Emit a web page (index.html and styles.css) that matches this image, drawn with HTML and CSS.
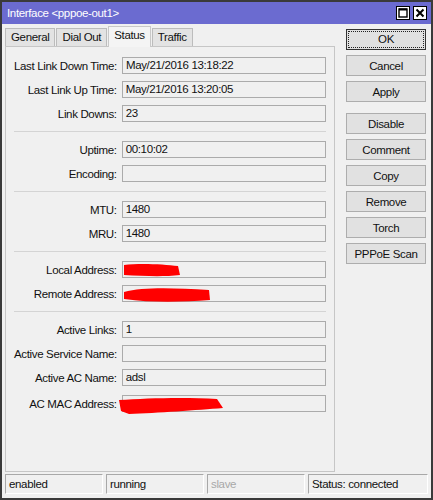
FILE: index.html
```html
<!DOCTYPE html>
<html>
<head>
<meta charset="utf-8">
<link rel="stylesheet" href="styles.css">
</head>
<body>
<div class="window">
  <div class="titlebar">
    <span class="title">Interface &lt;pppoe-out1&gt;</span>
    <div class="tb-buttons">
      <span class="tb-btn"><svg width="14" height="14" viewBox="0 0 14 14"><rect x="0.5" y="0.5" width="13" height="13" fill="#fff" stroke="#000"/><rect x="3" y="3" width="8" height="8" fill="none" stroke="#000" stroke-width="1.4"/><line x1="3" y1="3.5" x2="11" y2="3.5" stroke="#000" stroke-width="2"/></svg></span>
      <span class="tb-btn"><svg width="14" height="14" viewBox="0 0 14 14"><rect x="0.5" y="0.5" width="13" height="13" fill="#fff" stroke="#000"/><path d="M3.5 3.5 L10.5 10.5 M10.5 3.5 L3.5 10.5" stroke="#000" stroke-width="2"/></svg></span>
    </div>
  </div>
  <div class="body">
    <div class="left">
      <div class="tabs">
        <div class="tab">General</div>
        <div class="tab">Dial Out</div>
        <div class="tab active">Status</div>
        <div class="tab">Traffic</div>
      </div>
      <div class="panel">
        <div class="group">
          <div class="row"><label>Last Link Down Time:</label><div class="field">May/21/2016 13:18:22</div></div>
          <div class="row"><label>Last Link Up Time:</label><div class="field">May/21/2016 13:20:05</div></div>
          <div class="row"><label>Link Downs:</label><div class="field">23</div></div>
        </div>
        <div class="sep"></div>
        <div class="group">
          <div class="row"><label>Uptime:</label><div class="field">00:10:02</div></div>
          <div class="row"><label>Encoding:</label><div class="field"></div></div>
        </div>
        <div class="sep"></div>
        <div class="group">
          <div class="row"><label>MTU:</label><div class="field">1480</div></div>
          <div class="row"><label>MRU:</label><div class="field">1480</div></div>
        </div>
        <div class="sep"></div>
        <div class="group">
          <div class="row"><label>Local Address:</label><div class="field"><svg class="redact r1" width="60" height="18" viewBox="0 0 60 18"><path d="M1 4 C15 2 40 3 55 5 L57 14 C40 16 20 15 1 14 Z" fill="#f00"/></svg></div></div>
          <div class="row"><label>Remote Address:</label><div class="field"><svg class="redact r2" width="90" height="18" viewBox="0 0 90 18"><path d="M1 6 C20 1 50 2 86 4 L87 14 C60 16 30 17 1 13 Z" fill="#f00"/></svg></div></div>
        </div>
        <div class="sep"></div>
        <div class="group">
          <div class="row"><label>Active Links:</label><div class="field">1</div></div>
          <div class="row"><label>Active Service Name:</label><div class="field"></div></div>
          <div class="row"><label>Active AC Name:</label><div class="field">adsl</div></div>
          <div class="row last"><label>AC MAC Address:</label><div class="field"><svg class="redact r3" width="110" height="20" viewBox="0 0 110 20"><path d="M2 4 C30 2 70 1 100 3 L106 12 C80 14 40 17 12 18 L4 15 Z" fill="#f00"/></svg></div></div>
        </div>
      </div>
    </div>
    <div class="buttons">
      <button class="btn default"><span>OK</span></button>
      <button class="btn">Cancel</button>
      <button class="btn">Apply</button>
      <button class="btn gap">Disable</button>
      <button class="btn">Comment</button>
      <button class="btn">Copy</button>
      <button class="btn">Remove</button>
      <button class="btn">Torch</button>
      <button class="btn">PPPoE Scan</button>
    </div>
  </div>
  <div class="statusbar">
    <div class="cell c1">enabled</div>
    <div class="cell c2">running</div>
    <div class="cell c3 dim">slave</div>
    <div class="cell c4">Status: connected</div>
  </div>
</div>
</body>
</html>
```
FILE: styles.css
```css
* { box-sizing: border-box; }
html, body { margin: 0; padding: 0; background: #f0f0f0; }
body {
  font-family: "Liberation Sans", Arial, sans-serif;
  font-size: 11.5px;
  letter-spacing: -0.35px;
  color: #111;
}
.window {
  width: 433px;
  height: 500px;
  border: 2px solid #3a3a3a;
  background: #f0f0f0;
  display: flex;
  flex-direction: column;
}
.titlebar {
  height: 22px;
  background: #6b6bd0;
  display: flex;
  align-items: center;
  justify-content: space-between;
  padding: 0 4px 0 5px;
  color: #fff;
}
.title { font-size: 11.5px; }
.tb-buttons { display: flex; gap: 3px; }
.tb-btn { display: block; width: 14px; height: 14px; }
.tb-btn svg { display: block; }
.body {
  display: flex;
  padding: 2px 5px 0 3px;
  gap: 11px;
  flex: 1;
}
.left { width: 330px; display: flex; flex-direction: column; }
.tabs { display: flex; height: 20px; align-items: flex-end; gap: 1px; }
.tab {
  height: 18px;
  padding: 0 5px;
  line-height: 17px;
  background: #e3e3e3;
  border: 1px solid #bcbcbc;
  border-bottom: none;
  color: #111;
}
.tab.active {
  line-height: 17px;
  background: #f4f4f4;
  border-color: #c8c8c8;
  position: relative;
  z-index: 1;
  margin-bottom: -1px;
  height: 21px;
}
.panel {
  height: 426px;
  border: 1px solid #c6c6c6;
  background: #f0f0f0;
  padding: 10px 8px 0 8px;
}
.group { display: flex; flex-direction: column; gap: 7px; }
.row { display: flex; align-items: center; height: 17px; gap: 5px; }
.row.last { margin-top: 2px; }
.row label {
  width: 103px;
  display: flex;
  justify-content: flex-end;
  white-space: nowrap;
}
.field {
  width: 205px;
  height: 17px;
  border: 1px solid #ababab;
  background: #f0f0f0;
  padding-left: 3px;
  line-height: 15px;
  position: relative;
}
.sep { height: 1px; background: #d4d4d4; margin: 9px 0 9px 0; }
.redact { position: absolute; overflow: visible; }
.r1 { left: 0; top: -1px; }
.r2 { left: 0; top: 0px; }
.r3 { left: -6px; top: 0px; }
.buttons {
  width: 80px;
  display: flex;
  flex-direction: column;
  gap: 5px;
  padding-top: 3px;
}
.btn {
  height: 21px;
  width: 80px;
  font-family: inherit;
  font-size: 11.5px;
  letter-spacing: -0.35px;
  background: #e1e1e1;
  border: 1px solid #adadad;
  padding: 0;
  color: #111;
}
.btn.default { border: 1px solid #333; padding: 1px; }
.btn.default span {
  display: block;
  height: 100%;
  line-height: 15px;
  border: 1px dotted #222;
}
.btn.gap { margin-top: 6px; }
.statusbar {
  display: flex;
  height: 20px;
  gap: 3px;
  padding: 0 3px 0 3px;
  margin-bottom: 4px;
}
.cell {
  height: 20px;
  border-top: 1px solid #a8a8a8;
  border-left: 1px solid #a8a8a8;
  border-bottom: 1px solid #fff;
  border-right: 1px solid #fff;
  padding-left: 3px;
  line-height: 18px;
}
.c1 { width: 98px; }
.c2 { width: 98px; }
.c3 { width: 98px; }
.c4 { flex: 1; }
.dim { color: #a8a8a8; }
```
